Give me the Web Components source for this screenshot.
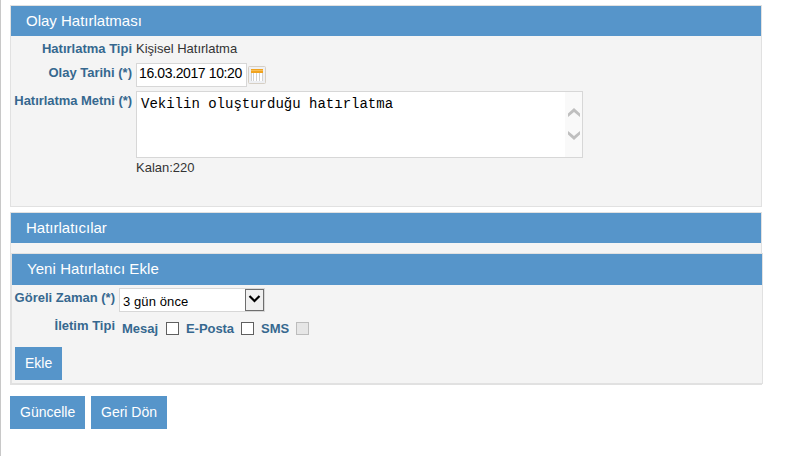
<!DOCTYPE html>
<html lang="tr">
<head>
<meta charset="utf-8">
<title>Olay Hatırlatması</title>
<style>
html { height: 100%; }
body {
    margin: 0;
    height: 456px;
    box-sizing: border-box;
    border-left: 1px solid #c8c8c8;
    padding: 5px 0 0 9px;
    overflow: hidden;
    background: #fff;
    color: #333;
    font: 13px/16px "Liberation Sans", Arial, sans-serif;
}
</style>
</head>
<body>
<reminder-page></reminder-page>

<script>
function define(name, html, setup) {
    const template = document.createElement('template');
    template.innerHTML = html;

    customElements.define(name, class extends HTMLElement {
        connectedCallback() {
            if (this.shadowRoot) return;
            this.attachShadow({ mode: 'open' });
            this.shadowRoot.appendChild(template.content.cloneNode(true));
            if (setup) setup(this, this.shadowRoot);
        }
    });
}

define('form-panel', `<style>
:host {
    display: block;
    box-sizing: border-box;
    width: 752px;
    background: #f4f4f4;
    border: 1px solid #e1e1e1;
}
h3 {
    margin: 0;
    padding-left: 15px;
    height: var(--head, 30px);
    background: #5695ca;
    color: #fff;
    font-weight: normal;
    font-size: 15px;
    line-height: 30px;
    letter-spacing: var(--head-spacing, 0);
}
</style>
<h3></h3>
<slot></slot>`, (host, root) => {
    root.querySelector('h3').textContent = host.getAttribute('heading');
});

define('form-row', `<style>
:host {
    display: grid;
    grid-template-columns: var(--label, 121px) 1fr;
    column-gap: 4px;
    align-items: start;
}
label {
    text-align: right;
    white-space: nowrap;
    color: #36688f;
    font-weight: bold;
    padding-top: var(--label-top, 0);
    letter-spacing: var(--label-spacing, 0);
}
div { display: flex; align-items: flex-start; }
</style>
<label></label>
<div><slot></slot></div>`, (host, root) => {
    root.querySelector('label').textContent = host.getAttribute('label') || '';
});

define('date-field', `<style>
:host { display: flex; align-items: flex-start; gap: 1px; }
.box {
    box-sizing: border-box;
    width: 111px;
    height: 24px;
    padding-left: 2px;
    border: 1px solid #d7d7d7;
    background: #fff;
    color: #000;
    font-size: 14px;
    line-height: 18px;
    white-space: nowrap;
    letter-spacing: -0.38px;
}
svg { margin-top: 3px; }
</style>
<div class="box"><slot></slot></div>
<svg width="18" height="18" viewBox="0 0 18 18">
    <rect x=".5" y=".5" width="17" height="17" rx="1" fill="#eef0f4" stroke="#d6cfc4"/>
    <rect x="3" y="6" width="12" height="9" fill="#d2d2d2"/>
    <path d="M4 7h1v8H4zM6 7h2v8H6zM9 7h2v8H9zM12 7h2v8h-2z" fill="#fff"/>
    <rect x="3" y="3" width="12" height="4" fill="#f0a31f"/>
    <rect x="3" y="4" width="12" height="1" fill="#f8bd55"/>
</svg>`);

define('text-area', `<style>
:host {
    display: flex;
    justify-content: space-between;
    box-sizing: border-box;
    width: 447px;
    height: 67px;
    border: 1px solid #d7d7d7;
    background: #fff;
}
.text {
    padding: 4px 0 0 4px;
    color: #000;
    font: 14px/16px "Liberation Mono", "Courier New", monospace;
}
.bar { width: 17px; background: #f9f9f9; }
</style>
<div class="text"><slot></slot></div>
<svg class="bar" width="17" height="65" viewBox="0 0 17 65">
    <path d="M3 21.5L9 16l6 5.5V25l-6-5-6 5z" fill="#bfbfbf"/>
    <path d="M3 39l6 5 6-5v3.5L9 48l-6-5.5z" fill="#bfbfbf"/>
</svg>`);

define('select-box', `<style>
:host {
    display: flex;
    justify-content: space-between;
    box-sizing: border-box;
    width: 146px;
    height: 24px;
    border: 1px solid #d7d7d7;
    background: #fff;
    color: #000;
}
.text { padding: 5px 0 0 3px; letter-spacing: 0.1px; }
</style>
<div class="text"><slot></slot></div>
<svg width="19" height="22" viewBox="0 0 19 22">
    <rect x=".5" y=".5" width="18" height="21" fill="#f0f0f0" stroke="#6e6e6e"/>
    <path d="M4.5 7l5 5 5-5" fill="none" stroke="#000" stroke-width="2.2"/>
</svg>`);

define('check-option', `<style>
:host {
    display: flex;
    align-items: center;
    color: #36688f;
    font-weight: bold;
    letter-spacing: var(--spacing, 0);
}
span { width: var(--text); white-space: nowrap; }
i {
    box-sizing: border-box;
    width: 13px;
    height: 13px;
    margin-top: -2px;
    border: 1px solid #5f5f5f;
    background: #fff;
}
:host([disabled]) i { border-color: #bcbcbc; background: #e6e6e6; }
</style>
<span><slot></slot></span><i></i>`);

define('push-button', `<style>
:host {
    display: block;
    box-sizing: border-box;
    height: 33px;
    padding-left: 10px;
    background: #5695ca;
    color: #fff;
    font-size: 14px;
    line-height: 33px;
    white-space: nowrap;
}
</style>
<slot></slot>`);

define('reminder-page', `<style>
:host { display: block; }
.event { height: 202px; }
.event .kind { height: 22px; padding-top: 5px; }
.event .date { height: 28px; --label-top: 2px; }
.event .note { --label-top: 2px; --label-spacing: -0.04px; }
.event .left { padding-top: 2px; }
.list { margin-top: 5px; height: 173px; }
.new {
    margin-top: 10px;
    height: 131px;
    --head: 31px;
    --label: 103px;
    --head-spacing: 0.07px;
}
.new .time { padding-top: 3px; height: 24px; --label-top: 2px; }
.new .send { padding-top: 6px; --label-top: 0; }
.options { display: flex; padding: 3px 0 0 3px; gap: 7px; }
.add { width: 47px; margin: 10px 0 0 3px; }
.actions { display: flex; gap: 6px; margin-top: 11px; }
</style>
<form-panel class="event" heading="Olay Hatırlatması">
    <form-row class="kind" label="Hatırlatma Tipi">Kişisel Hatırlatma</form-row>
    <form-row class="date" label="Olay Tarihi (*)"><date-field>16.03.2017 10:20</date-field></form-row>
    <form-row class="note" label="Hatırlatma Metni (*)"><text-area>Vekilin oluşturduğu hatırlatma</text-area></form-row>
    <form-row class="left">Kalan:220</form-row>
</form-panel>
<form-panel class="list" heading="Hatırlatıcılar">
    <form-panel class="new" heading="Yeni Hatırlatıcı Ekle">
        <form-row class="time" label="Göreli Zaman (*)"><select-box>3 gün önce</select-box></form-row>
        <form-row class="send" label="İletim Tipi">
            <div class="options">
                <check-option style="--text: 44px">Mesaj</check-option>
                <check-option style="--text: 55px; --spacing: -0.05px">E-Posta</check-option>
                <check-option style="--text: 35px">SMS</check-option>
            </div>
        </form-row>
        <push-button class="add">Ekle</push-button>
    </form-panel>
</form-panel>
<div class="actions">
    <push-button style="width: 75px">Güncelle</push-button>
    <push-button style="width: 76px">Geri Dön</push-button>
</div>`, (host, root) => {
    const options = root.querySelectorAll('check-option');
    options[options.length - 1].setAttribute('disabled', '');
});
</script>
</body>
</html>
